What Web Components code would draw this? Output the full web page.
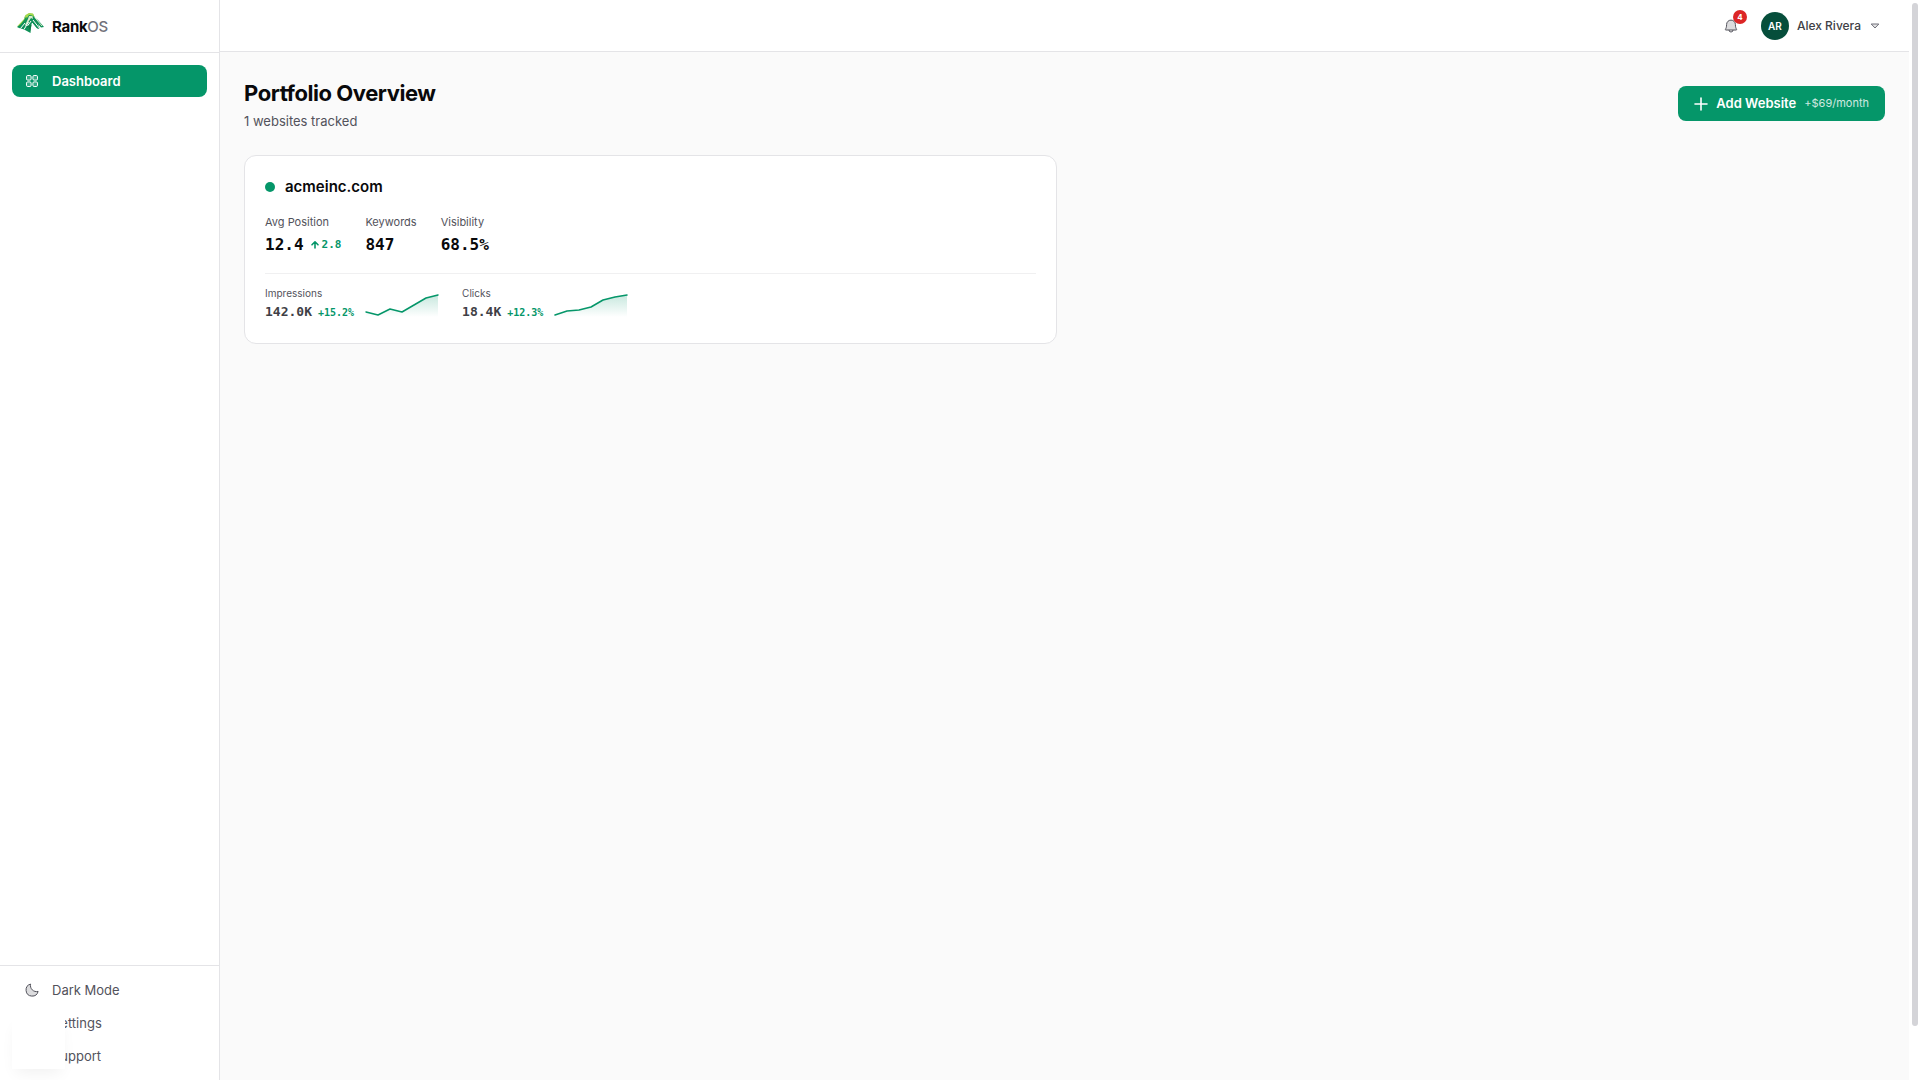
<!DOCTYPE html>
<html lang="en">
<head>
<meta charset="utf-8">
<title>RankOS</title>
<style>
    html, body {
        margin: 0;
        height: 100%;
    }
    body {
        --green: #059669;
        --line: #e4e4e7;
        --soft-line: #f0f0f1;
        --ink: #09090b;
        --muted: #52525b;
        --mono: "DejaVu Sans Mono", monospace;
        font-family: Inter, sans-serif;
        font-size: 13px;
        line-height: 20px;
        color: var(--ink);
        background: #fff;
    }
</style>
</head>
<body>
<rank-app>
    <side-bar slot="side">
        <nav-item active icon="grid">Dashboard</nav-item>
        <nav-item slot="footer" icon="moon">Dark Mode</nav-item>
        <nav-item slot="footer" icon="gear">Settings</nav-item>
        <nav-item slot="footer" icon="help">Support</nav-item>
    </side-bar>
    <top-bar slot="top" initials="AR" alerts="4">Alex Rivera</top-bar>
    <page-heading>
        Portfolio Overview
        <span slot="sub">1 websites tracked</span>
        <add-button slot="action" price="+$69/month">Add Website</add-button>
    </page-heading>
    <card-grid>
        <site-card>
            acmeinc.com
            <stat-item slot="stats" label="Avg Position" change="2.8">12.4</stat-item>
            <stat-item slot="stats" label="Keywords">847</stat-item>
            <stat-item slot="stats" label="Visibility">68.5%</stat-item>
            <trend-item slot="trends" label="Impressions" change="+15.2%" points="19,22,16,19,12,5,2">142.0K</trend-item>
            <trend-item slot="trends" label="Clicks" change="+12.3%" points="22,18,17,14,7,4,2">18.4K</trend-item>
        </site-card>
    </card-grid>
</rank-app>

<script>
    const icons = {
        grid: `<rect x="2.5" y="2.5" width="4.6" height="4.6" rx="1.2"/><rect x="8.9" y="2.5" width="4.6" height="4.6" rx="1.2"/>
               <rect x="2.5" y="8.9" width="4.6" height="4.6" rx="1.2"/><rect x="8.9" y="8.9" width="4.6" height="4.6" rx="1.2"/>`,
        moon: `<path d="M6.6 2.1A6.1 6.1 0 1 0 14.1 9.4 6.1 6.1 0 0 1 6.6 2.1z"/>`,
        gear: `<circle cx="8" cy="8" r="5.5"/><circle cx="8" cy="8" r="2"/>`,
        help: `<circle cx="8" cy="8" r="5.5"/><path d="M6.5 6.5a1.5 1.5 0 1 1 1.5 2v.5"/>`
    };

    class RankApp extends HTMLElement {
        constructor() {
            super();
            this.attachShadow({ mode: 'open' });
            this.shadowRoot.innerHTML = `
                <style>
                    :host {
                        display: flex;
                        min-height: 100vh;
                    }
                    .page {
                        flex: 1;
                        min-width: 0;
                        display: flex;
                        flex-direction: column;
                        background: #fafafa;
                    }
                    main {
                        flex: 1;
                        padding: 24px;
                    }
                    .track {
                        width: 6px;
                        padding: 3px 2px 0 3px;
                    }
                    .thumb {
                        height: 95%;
                        border-radius: 3px;
                        background: #d4d4d8;
                    }
                    .widget {
                        position: fixed;
                        left: 12px;
                        bottom: 11px;
                        width: 53px;
                        height: 53px;
                        background: #fff;
                        box-shadow: 0 8px 16px -4px rgba(0, 0, 0, 0.06);
                    }
                </style>
                <slot name="side"></slot>
                <div class="page">
                    <slot name="top"></slot>
                    <main><slot></slot></main>
                </div>
                <div class="track"><div class="thumb"></div></div>
                <div class="widget"></div>
            `;
        }
    }

    class SideBar extends HTMLElement {
        constructor() {
            super();
            this.attachShadow({ mode: 'open' });
            this.shadowRoot.innerHTML = `
                <style>
                    :host {
                        display: flex;
                        flex-direction: column;
                        flex: none;
                        box-sizing: border-box;
                        width: 220px;
                        background: #fff;
                        border-right: 1px solid var(--line);
                    }
                    .brand {
                        display: flex;
                        align-items: center;
                        gap: 8px;
                        height: 50px;
                        padding: 2px 16px 0;
                        border-bottom: 1px solid var(--line);
                        color: var(--ink);
                        text-decoration: none;
                        font-size: 15px;
                        font-weight: 700;
                        letter-spacing: -0.02em;
                    }
                    .brand svg {
                        margin-bottom: 8px;
                    }
                    .brand span span {
                        color: #71717a;
                        font-weight: 500;
                    }
                    nav {
                        flex: 1;
                        padding: 12px;
                    }
                    .footer {
                        display: flex;
                        flex-direction: column;
                        gap: 1px;
                        padding: 8px 12px;
                        border-top: 1px solid var(--line);
                    }
                </style>
                <a class="brand" href="#">
                    <svg width="28" height="22" viewBox="0 0 28 22">
                        <path d="M1 15L8 8L9 4L13 1.5L17 2L19 6L22 8L28 15L25 15.5L22 12L24 17L21 16.5L16 11L15 14L14.500 21L9 18L6.500 17L3 16Z" fill="#0f9158"/>
                        <path d="M1 14.500L8 7L9.500 3L13 1L17 1.500L18.500 5L16 3.500L13 3L11 6L7 11L4 13Z" fill="#a6d94a"/>
                        <path d="M8 8L10 5L11 6L7 12L4 15L3 14.500Z" fill="#0f9158"/>
                        <path d="M13 4L16.500 4L17 7L15 6L13 9L10 14L9 13L12 7Z" fill="#d9eccb"/>
                        <path d="M9 11L4.500 16.500M12.500 10L8 17.500M15 9L11.500 14M17 8L24 17M16 11L20.500 17" stroke="#fff" stroke-width="1" fill="none"/>
                        <path d="M19 5.500L21 8L26 14" stroke="#d9eccb" stroke-width="1" fill="none"/>
                        <path d="M11 15L13 14L14 17L15 13" stroke="#0b7a45" stroke-width="1.200" fill="none"/>
                    </svg>
                    <span>Rank<span>OS</span></span>
                </a>
                <nav><slot></slot></nav>
                <div class="footer"><slot name="footer"></slot></div>
            `;
        }
    }

    class NavItem extends HTMLElement {
        constructor() {
            super();
            this.attachShadow({ mode: 'open' });
            this.shadowRoot.innerHTML = `
                <style>
                    :host {
                        display: block;
                    }
                    a {
                        display: flex;
                        align-items: center;
                        gap: 12px;
                        height: 32px;
                        padding: 0 12px;
                        border-radius: 8px;
                        color: var(--muted);
                        text-decoration: none;
                    }
                    svg {
                        fill: #52525b33;
                        stroke: currentColor;
                        stroke-linejoin: round;
                    }
                    :host([active]) a {
                        background: var(--green);
                        color: #fff;
                        font-weight: 600;
                    }
                    :host([active]) svg {
                        fill: #ffffff33;
                    }
                </style>
                <a href="#">
                    <svg width="16" height="16" viewBox="0 0 16 16">${icons[this.getAttribute('icon')]}</svg>
                    <slot></slot>
                </a>
            `;
        }
    }

    class TopBar extends HTMLElement {
        constructor() {
            super();
            this.attachShadow({ mode: 'open' });
            this.shadowRoot.innerHTML = `
                <style>
                    :host {
                        display: flex;
                        align-items: center;
                        justify-content: flex-end;
                        gap: 18px;
                        height: 51px;
                        padding: 0 28px;
                        background: #fff;
                        border-bottom: 1px solid var(--line);
                    }
                    button {
                        display: flex;
                        align-items: center;
                        padding: 0;
                        border: 0;
                        background: none;
                        font: inherit;
                        color: #3f3f46;
                    }
                    .bell {
                        position: relative;
                        padding: 4px;
                    }
                    .badge {
                        position: absolute;
                        top: -4px;
                        right: -4px;
                        width: 14px;
                        border-radius: 7px;
                        background: #dc2626;
                        color: #fff;
                        font-size: 8px;
                        font-weight: 700;
                        line-height: 14px;
                    }
                    .user {
                        gap: 8px;
                        font-size: 12px;
                        font-weight: 500;
                    }
                    .avatar {
                        width: 28px;
                        border-radius: 50%;
                        background: #064e3b;
                        color: #fff;
                        font-size: 10px;
                        font-weight: 600;
                        line-height: 28px;
                    }
                </style>
                <button class="bell">
                    <svg width="16" height="16" viewBox="0 0 16 16" fill="#52525b33" stroke="#52525b" stroke-linejoin="round">
                        <path d="M3.600 6.500a4.400 4.400 0 0 1 8.800 0c0 2.600.6 3.900 1.200 4.800a.5.5 0 0 1-.4.7H2.800a.5.5 0 0 1-.4-.7c.6-.9 1.200-2.200 1.200-4.800z"/>
                        <path d="M6 12a2 2 0 0 0 4 0" fill="none"/>
                    </svg>
                    <span class="badge">${this.getAttribute('alerts')}</span>
                </button>
                <button class="user">
                    <span class="avatar">${this.getAttribute('initials')}</span>
                    <slot></slot>
                    <svg width="12" height="12" viewBox="0 0 12 12" fill="#71717a33" stroke="#71717a" stroke-linejoin="round">
                        <path d="M2.200 4h7.600L6 8z"/>
                    </svg>
                </button>
            `;
        }
    }

    class PageHeading extends HTMLElement {
        constructor() {
            super();
            this.attachShadow({ mode: 'open' });
            this.shadowRoot.innerHTML = `
                <style>
                    :host {
                        display: flex;
                        align-items: center;
                        justify-content: space-between;
                        margin-bottom: 24px;
                    }
                    h1 {
                        margin: 0;
                        font-size: 22px;
                        font-weight: 700;
                        line-height: 35px;
                        letter-spacing: -0.02em;
                    }
                    p {
                        margin: 0;
                        color: var(--muted);
                    }
                </style>
                <div>
                    <h1><slot></slot></h1>
                    <p><slot name="sub"></slot></p>
                </div>
                <slot name="action"></slot>
            `;
        }
    }

    class AddButton extends HTMLElement {
        constructor() {
            super();
            this.attachShadow({ mode: 'open' });
            this.shadowRoot.innerHTML = `
                <style>
                    :host {
                        display: block;
                    }
                    button {
                        display: flex;
                        align-items: center;
                        gap: 8px;
                        padding: 8px 16px;
                        border: 0;
                        border-radius: 8px;
                        background: var(--green);
                        color: #fff;
                        font: inherit;
                        font-weight: 600;
                        line-height: 19px;
                    }
                    .price {
                        font-size: 11px;
                        font-weight: 400;
                        opacity: 0.8;
                    }
                </style>
                <button>
                    <svg width="14" height="14" viewBox="0 0 14 14" stroke="#fff" stroke-width="1.600" stroke-linecap="round">
                        <path d="M1 7h12M7 1v12"/>
                    </svg>
                    <slot></slot>
                    <span class="price">${this.getAttribute('price')}</span>
                </button>
            `;
        }
    }

    class CardGrid extends HTMLElement {
        constructor() {
            super();
            this.attachShadow({ mode: 'open' });
            this.shadowRoot.innerHTML = `
                <style>
                    :host {
                        display: grid;
                        grid-template-columns: 1fr 1fr;
                        gap: 16px;
                    }
                </style>
                <slot></slot>
            `;
        }
    }

    class SiteCard extends HTMLElement {
        constructor() {
            super();
            this.attachShadow({ mode: 'open' });
            this.shadowRoot.innerHTML = `
                <style>
                    :host {
                        display: block;
                        padding: 20px;
                        border: 1px solid var(--line);
                        border-radius: 12px;
                        background: #fff;
                    }
                    h2 {
                        display: flex;
                        align-items: center;
                        gap: 10px;
                        margin: 0 0 16px;
                        font-size: 15px;
                        font-weight: 600;
                        line-height: 22px;
                    }
                    .dot {
                        width: 10px;
                        height: 10px;
                        border-radius: 50%;
                        background: var(--green);
                    }
                    .row {
                        display: flex;
                        gap: 24px;
                    }
                    .trends {
                        margin-top: 16px;
                        padding-top: 12px;
                        border-top: 1px solid var(--soft-line);
                    }
                </style>
                <h2><span class="dot"></span><slot></slot></h2>
                <div class="row"><slot name="stats"></slot></div>
                <div class="row trends"><slot name="trends"></slot></div>
            `;
        }
    }

    class StatItem extends HTMLElement {
        constructor() {
            super();
            this.attachShadow({ mode: 'open' });
            const change = this.getAttribute('change');
            this.shadowRoot.innerHTML = `
                <style>
                    :host {
                        display: block;
                    }
                    .label {
                        margin-bottom: 3px;
                        color: var(--muted);
                        font-size: 11px;
                        line-height: 16px;
                    }
                    .value {
                        display: flex;
                        align-items: center;
                        gap: 6px;
                        font-family: var(--mono);
                        font-size: 16px;
                        font-weight: 700;
                        line-height: 24px;
                    }
                    .change {
                        display: flex;
                        align-items: center;
                        gap: 2px;
                        color: var(--green);
                        font-size: 11px;
                    }
                </style>
                <div class="label">${this.getAttribute('label')}</div>
                <div class="value"><slot></slot>${change ? `
                    <span class="change">
                        <svg width="10" height="10" viewBox="0 0 10 10" fill="none" stroke="currentColor" stroke-width="1.600" stroke-linecap="round" stroke-linejoin="round">
                            <path d="M5 8V2M2 4.800 5 1.800l3 3"/>
                        </svg>${change}</span>` : ''}
                </div>
            `;
        }
    }

    class TrendItem extends HTMLElement {
        constructor() {
            super();
            this.attachShadow({ mode: 'open' });
            const line = this.getAttribute('points').split(',').map((y, i) => `${i * 12},${y}`).join(' ');
            this.shadowRoot.innerHTML = `
                <style>
                    :host {
                        display: flex;
                        align-items: center;
                        gap: 12px;
                    }
                    .label {
                        margin-bottom: 2px;
                        color: var(--muted);
                        font-size: 10px;
                        line-height: 14px;
                    }
                    .value {
                        display: flex;
                        align-items: baseline;
                        gap: 6px;
                        color: #3f3f46;
                        font-family: var(--mono);
                        font-size: 13px;
                        font-weight: 700;
                    }
                    .change {
                        color: var(--green);
                        font-size: 10px;
                    }
                    svg {
                        overflow: visible;
                    }
                </style>
                <div>
                    <div class="label">${this.getAttribute('label')}</div>
                    <div class="value"><slot></slot><span class="change">${this.getAttribute('change')}</span></div>
                </div>
                <svg width="72" height="24" viewBox="0 0 72 24">
                    <defs>
                        <linearGradient id="fade" x1="0" y1="0" x2="0" y2="1">
                            <stop offset="0" stop-color="#059669" stop-opacity="0.22"/>
                            <stop offset="1" stop-color="#059669" stop-opacity="0"/>
                        </linearGradient>
                    </defs>
                    <polygon points="0,24 ${line} 72,24" fill="url(#fade)"/>
                    <polyline points="${line}" fill="none" stroke="#059669" stroke-width="1.500" stroke-linecap="round" stroke-linejoin="round"/>
                </svg>
            `;
        }
    }

    customElements.define('rank-app', RankApp);
    customElements.define('side-bar', SideBar);
    customElements.define('nav-item', NavItem);
    customElements.define('top-bar', TopBar);
    customElements.define('page-heading', PageHeading);
    customElements.define('add-button', AddButton);
    customElements.define('card-grid', CardGrid);
    customElements.define('site-card', SiteCard);
    customElements.define('stat-item', StatItem);
    customElements.define('trend-item', TrendItem);
</script>
</body>
</html>
